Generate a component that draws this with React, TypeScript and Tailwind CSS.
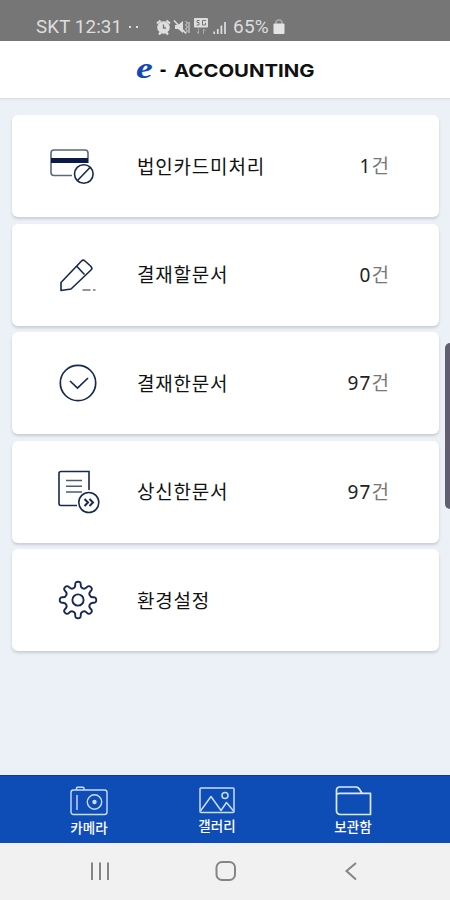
import type { ReactNode } from "react";

const NAVY = "#17294d";

function CardIcon() {
  return (
    <svg width="48" height="42" viewBox="0 0 48 42" fill="none" stroke={NAVY} strokeWidth="1.600">
      <path d="M24 30.500H6a3 3 0 0 1-3-3V8a3 3 0 0 1 3-3h31a3 3 0 0 1 3 3v10" stroke="#5b6780" />
      <path d="M3 15.500h37" stroke="#0b1a48" strokeWidth="4.800" />
      <circle cx="35.800" cy="29" r="9.300" />
      <path d="M29.500 35.500L42 22.500" />
    </svg>
  );
}

function PencilIcon() {
  return (
    <svg width="48" height="42" viewBox="0 0 48 42" fill="none" stroke={NAVY} strokeWidth="1.600" strokeLinejoin="round">
      <path d="M13 36V28.500L33.500 7a2.500 2.500 0 0 1 3.500 0L43 12.500a2.500 2.500 0 0 1 0 3.500L23 35L13 36.500z" />
      <path d="M28.500 12L36.500 20.500" />
      <path d="M34.500 36h8M45 36h2.500" stroke="#6b7485" />
    </svg>
  );
}

function CheckIcon() {
  return (
    <svg width="50" height="42" viewBox="0 0 50 42" fill="none" stroke={NAVY} strokeWidth="1.700">
      <circle cx="30" cy="21" r="17.700" />
      <path d="M22 19L29.500 26L40 16" />
    </svg>
  );
}

function DocIcon() {
  return (
    <svg width="52" height="46" viewBox="0 0 52 46" fill="none" stroke={NAVY} strokeWidth="1.600">
      <path d="M29 36.500H13a2 2 0 0 1-2-2V4.500a2 2 0 0 1 2-2H41V21" />
      <path d="M18 11.500h16M18 17.200h16M18 23h16" stroke="#4d5b78" />
      <circle cx="40.800" cy="33.500" r="10" />
      <path d="M36.500 30L40 33.500L36.500 37M41.500 30L45 33.500L41.500 37" strokeWidth="2" />
    </svg>
  );
}

// Eight teeth, corners softened by running quadratics between edge midpoints
function gearPath(c: number, outer: number, root: number) {
  const pts: [number, number][] = [];
  for (let i = 0; i < 8; i++) {
    const steps = [[-11.5, root], [-9, outer], [9, outer], [11.5, root]];
    steps.forEach(([deg, r]) => {
      const a = ((i * 45 + deg) * Math.PI) / 180;
      pts.push([c + r * Math.sin(a), c - r * Math.cos(a)]);
    });
  }
  const mid = (a: number[], b: number[]) => `${(a[0] + b[0]) / 2} ${(a[1] + b[1]) / 2}`;
  const start = mid(pts[pts.length - 1], pts[0]);
  return `M${start}` + pts.map((p, i) => `Q${p[0]} ${p[1]} ${mid(p, pts[(i + 1) % pts.length])}`).join("") + "Z";
}

function GearIcon() {
  return (
    <svg width="42" height="42" viewBox="0 0 42 42" fill="none" stroke={NAVY} strokeWidth="1.900" className="ml-[9px]">
      <path d={gearPath(21, 18.5, 12.8)} />
      <circle cx="21" cy="21" r="5.600" />
    </svg>
  );
}

function CameraIcon() {
  return (
    <svg width="38" height="30" viewBox="0 0 38 30" fill="none" stroke="#c9ddfa" strokeWidth="1.400">
      <rect x="1" y="4" width="36" height="24.500" rx="2.500" />
      <path d="M6.500 4V2.200a1 1 0 0 1 1-1h5.500a1 1 0 0 1 1 1V4M7 9v15" />
      <circle cx="24.500" cy="16" r="7.200" />
      <circle cx="24.500" cy="16" r="1.500" fill="#c9ddfa" />
    </svg>
  );
}

function GalleryIcon() {
  return (
    <svg width="36" height="27" viewBox="0 0 36 27" fill="none" stroke="#c9ddfa" strokeWidth="1.500" strokeLinejoin="round">
      <rect x="1" y="1" width="34" height="24.500" rx="1" />
      <path d="M1.500 24L12 9.500L22 23.500L27.500 15.500L34.500 24M19.500 20" />
      <circle cx="26" cy="8.500" r="3" />
    </svg>
  );
}

function FolderIcon() {
  return (
    <svg width="37" height="30" viewBox="0 0 37 30" fill="none" stroke="#dce9fd" strokeWidth="1.700" strokeLinejoin="round">
      <path d="M1.500 8.500V4a3 3 0 0 1 3-3H21c2 0 3 1 4 3l2 3.300h8.500V28.500H5A3.500 3.500 0 0 1 1.500 25zM1.500 8.500c.5-1 1.500-1.200 3-1.200H28" />
    </svg>
  );
}

function StatusIcons() {
  return (
    <svg width="75" height="20" viewBox="0 0 75 20" fill="none" stroke="#dedede" className="ml-[17px]">
      {/* alarm */}
      <circle cx="8.500" cy="10.500" r="5.800" fill="#dedede" />
      <path d="M2 6.500L5.500 3.500M15 6.500L11.500 3.500M4 17.500L6 15M13 17.500L11 15" strokeWidth="2.200" />
      <path d="M8.500 7.500V11H11" stroke="#767676" strokeWidth="1.300" />
      {/* mute */}
      <path d="M20 8h3l5-4v12l-5-4h-3z" fill="#dedede" stroke="none" />
      <path d="M19 3.500L31 16.500" strokeWidth="1.600" />
      <path d="M30.500 4l2 2-2 2 2 2-2 2 2 2-2 2M34 5v11" strokeWidth="1" />
      {/* network */}
      <rect x="39" y="1" width="14" height="9.500" rx="1" fill="#dedede" stroke="none" />
      <path d="M44.500 3.500h-2.500v2h2v2.500h-2.500M51 3.500h-3.500v4.500h3V5.800" stroke="#767676" />
      <path d="M43.500 11.500v5l-2-2M48.500 17v-5l2 2" stroke="#aaa" />
      {/* signal */}
      <path d="M59.200 17v-2.500M62.800 17v-5M66.400 17V8.500M70 17V5" strokeWidth="1.700" />
    </svg>
  );
}

type Item = { label: string; count?: number; icon: ReactNode };

const ITEMS: Item[] = [
  { label: "법인카드미처리", count: 1, icon: <CardIcon /> },
  { label: "결재할문서", count: 0, icon: <PencilIcon /> },
  { label: "결재한문서", count: 97, icon: <CheckIcon /> },
  { label: "상신한문서", count: 97, icon: <DocIcon /> },
  { label: "환경설정", icon: <GearIcon /> },
];

export default function App() {
  return (
    <div className="relative flex h-[900px] w-[450px] flex-col overflow-hidden bg-[#ebf1f7] font-['Noto_Sans','Noto_Sans_CJK_KR',sans-serif]">
      {/* Status bar */}
      <div className="flex h-[41px] shrink-0 items-center bg-[#767676] pt-[13px] pl-9 text-[#dedede]">
        <span className="mt-px w-[86px] font-[Roboto,sans-serif] text-[18.8px] tracking-[0.1px] whitespace-nowrap">SKT 12:31</span>
        <span className="ml-[7px] flex gap-[5px]">
          <i className="size-[2px] bg-[#dedede]" />
          <i className="size-[2px] bg-[#dedede]" />
        </span>
        <StatusIcons />
        <span className="mt-px ml-[3px] w-[38px] font-[Roboto,sans-serif] text-[19px] tracking-[0.2px] whitespace-nowrap">65%</span>
        <svg width="12" height="16" viewBox="0 0 12 16" className="ml-[2px]">
          <path d="M3 5V4a3 3 0 0 1 6 0v1" fill="none" stroke="#aaa" strokeWidth="1.5" />
          <rect x="0.500" y="4.500" width="11" height="10.500" rx="1" fill="#e4e4e4" />
        </svg>
      </div>

      {/* Title */}
      <header className="flex h-[58px] shrink-0 items-center border-b border-[#d9dfe4] bg-white pl-[136px] shadow-[0_1px_2px_rgba(0,0,0,0.06)]">
        <span className="w-[24px] origin-left scale-x-[1.3] font-['Liberation_Serif',serif] text-[29px] leading-none font-bold text-[#1149b5] italic">
          <span className="relative -top-px">e</span>
        </span>
        <span className="w-[14px] text-[19px] font-bold">-</span>
        <span className="mt-[2px] origin-left scale-x-[1.13] font-[Inter,sans-serif] text-[18px] font-bold text-[#111]">ACCOUNTING</span>
      </header>

      {/* Menu */}
      <main className="flex flex-1 flex-col gap-[6.5px] pt-4 pr-[11px] pl-3">
        {ITEMS.map((item) => (
          <div
            key={item.label}
            className="flex h-[102px] shrink-0 items-center rounded-md bg-white pr-[50px] shadow-[0_2px_3px_rgba(0,0,0,0.15)]"
          >
            <div className="w-[125px] pl-9">{item.icon}</div>
            <span className="mt-[2px] flex-1 text-[19px] tracking-[0.8px] text-[#111]">{item.label}</span>
            {item.count !== undefined && (
              <span className="mt-px text-[19px] text-[#222]">
                <span className="tracking-[1.1px]">{item.count}</span>
                <span className="text-[#777]">건</span>
              </span>
            )}
          </div>
        ))}
      </main>

      {/* Edge panel handle */}
      <div className="absolute top-[343px] right-0 h-[166px] w-[5px] rounded-l-md bg-[#625f70]" />

      {/* Bottom tabs */}
      <footer className="flex h-[68px] shrink-0 border-t border-[#0b3f96] bg-[#0f4db6] text-[13.5px] leading-[18px] font-medium text-white">
        <div className="flex w-[178px] flex-col items-center pt-[10px]">
          <CameraIcon />
          <span className="mt-[3px]">카메라</span>
        </div>
        <div className="flex w-[78px] flex-col items-center pt-[11px]">
          <GalleryIcon />
          <span className="mt-[3px]">갤러리</span>
        </div>
        <div className="flex flex-1 flex-col items-center pt-[10px]">
          <FolderIcon />
          <span className="mt-[2px]">보관함</span>
        </div>
      </footer>

      {/* System navigation */}
      <nav className="flex h-[57px] shrink-0 items-center bg-[#f1f1f1] pb-[2px] pl-[90px]">
        <svg width="20" height="20" viewBox="0 0 20 20" stroke="#858585" strokeWidth="2" fill="none">
          <path d="M2 1.500v17.500M10 1.500v17.500M18 1.500v17.500" />
        </svg>
        <svg width="22" height="22" viewBox="0 0 22 22" stroke="#858585" strokeWidth="2" fill="none" className="ml-[105px]">
          <rect x="1.500" y="2" width="18.500" height="18" rx="5.500" />
        </svg>
        <svg width="14" height="20" viewBox="0 0 14 20" stroke="#858585" strokeWidth="2" fill="none" className="ml-[107px]">
          <path d="M12 2L2.500 10L12 18.500" />
        </svg>
      </nav>
    </div>
  );
}
